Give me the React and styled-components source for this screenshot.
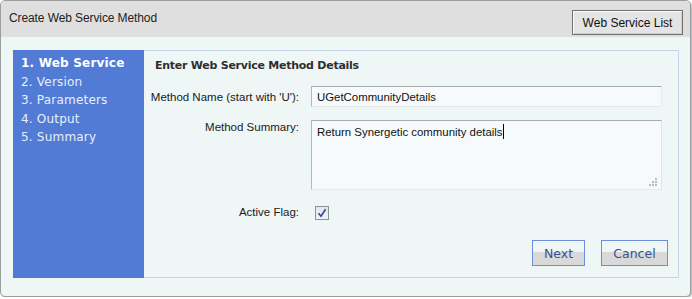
import React from "react";
import styled, { createGlobalStyle } from "styled-components";

const Global = createGlobalStyle`
  html, body { margin: 0; padding: 0; background: #ffffff; }
  * { box-sizing: border-box; }
`;

const Dialog = styled.div`
  width: 691px;
  height: 297px;
  border: 1px solid #9a9e9e;
  border-radius: 5px;
  background: #eef6f6;
  box-shadow: 1px 1px 1px #b5b8b8;
  overflow: hidden;
  display: flex;
  flex-direction: column;
`;

const TitleBar = styled.div`
  height: 36px;
  flex: none;
  background: #dfdfdf;
  display: flex;
  justify-content: space-between;
  align-items: flex-start;
  padding: 0 7px 0 8px;
`;

const Title = styled.div`
  margin-top: 9px;
  font: 12px/16px "Liberation Sans", Arial, sans-serif;
  letter-spacing: -0.1px;
  color: #222;
`;

const ListButton = styled.button`
  margin-top: 9px;
  width: 111px;
  height: 25px;
  padding: 0;
  border: 1px solid #707070;
  background: #e4e4e4;
  box-shadow: inset 1px 1px 0 #fbfbfb, inset -1px -1px 0 #cfcfcf;
  font: 12px "Liberation Sans", Arial, sans-serif;
  color: #111;
`;

const Body = styled.div`
  padding: 13px 11px 0 12px;
`;

const Panel = styled.div`
  height: 228px;
  border: 1px solid #c6d5e8;
  display: flex;
`;

const Sidebar = styled.ul`
  width: 131px;
  margin: -1px 0 -1px -1px;
  padding: 4px 0 0 8px;
  list-style: none;
  background: #527bd6;
`;

const Step = styled.li`
  font: ${(p) => (p.$active ? "bold" : "normal")} 12px/18.5px "DejaVu Sans", Verdana, sans-serif;
  color: ${(p) => (p.$active ? "#ffffff" : "#e8eefa")};
  letter-spacing: 0.2px;
`;

const Content = styled.div`
  flex: 1;
  padding: 7px 10px 0 0;
  display: flex;
  flex-direction: column;
`;

const Heading = styled.div`
  padding-left: 11px;
  font: bold 11px/16px "DejaVu Sans", Verdana, sans-serif;
  letter-spacing: -0.25px;
  color: #2e2e2e;
  margin-bottom: 12px;
`;

const Form = styled.div`
  display: grid;
  grid-template-columns: 155px 351px;
  column-gap: 12px;
  row-gap: 13px;
  align-items: center;
`;

const Label = styled.div`
  text-align: right;
  font: 11.5px/14px "Liberation Sans", Arial, sans-serif;
  color: #1a1a1a;
  align-self: ${(p) => (p.$top ? "start" : "center")};
`;

const Field = styled.div`
  height: 21px;
  border: 1px solid #c8cccc;
  border-top-color: #a8acac;
  border-left-color: #b4b8b8;
  border-right-color: #e6eaea;
  border-bottom-color: #e6eaea;
  background: #f6fafa;
  padding: 2px 5px;
  font: 11.4px/16px "Liberation Sans", Arial, sans-serif;
  color: #111;
`;

const Area = styled.div`
  position: relative;
  height: 70px;
  border: 1px solid #c8cccc;
  border-top-color: #a8acac;
  border-left-color: #b4b8b8;
  border-right-color: #dfe3e3;
  border-bottom-color: #e6eaea;
  background: #f6fafa;
  padding: 3px 5px;
  font: 11.4px/16px "Liberation Sans", Arial, sans-serif;
  color: #111;
`;

const Caret = styled.span`
  display: inline-block;
  width: 1px;
  height: 15px;
  background: #000;
  vertical-align: -3px;
`;

const Grip = styled.svg`
  position: absolute;
  right: 4px;
  bottom: 3px;
`;

const CheckRow = styled.div`
  padding: 3px 0 0 4px;
`;

const CheckBox = styled.span`
  display: flex;
  width: 14px;
  height: 14px;
  border: 1px solid #8e9296;
  background: linear-gradient(#e2e5ea, #f0f2f6);
  align-items: center;
  justify-content: center;
`;

const Actions = styled.div`
  display: flex;
  justify-content: flex-end;
  gap: 16px;
  margin-top: 20px;
`;

const ActionButton = styled.button`
  width: ${(p) => p.$w}px;
  height: 26px;
  padding: 0;
  border: 1px solid #6c8edc;
  background: linear-gradient(#eef6f6 0, #eef6f6 45%, #d9d9d9 45%, #d9d9d9 100%);
  font: 12.5px "DejaVu Sans", Verdana, sans-serif;
  color: #3b5190;
`;

export default function App() {
  return (
    <>
      <Global />
      <Dialog>
        <TitleBar>
          <Title>Create Web Service Method</Title>
          <ListButton>Web Service List</ListButton>
        </TitleBar>
        <Body>
          <Panel>
            <Sidebar>
              <Step $active>1. Web Service</Step>
              <Step>2. Version</Step>
              <Step>3. Parameters</Step>
              <Step>4. Output</Step>
              <Step>5. Summary</Step>
            </Sidebar>
            <Content>
              <Heading>Enter Web Service Method Details</Heading>
              <Form>
                <Label>Method Name (start with 'U'):</Label>
                <Field>UGetCommunityDetails</Field>
                <Label $top>Method Summary:</Label>
                <Area>
                  Return Synergetic community details<Caret />
                  <Grip width="9" height="9" viewBox="0 0 9 9">
                    <g fill="#b8bcbc">
                      <rect x="7" y="1" width="2" height="2" />
                      <rect x="4" y="4" width="2" height="2" />
                      <rect x="7" y="4" width="2" height="2" />
                      <rect x="1" y="7" width="2" height="2" />
                      <rect x="4" y="7" width="2" height="2" />
                      <rect x="7" y="7" width="2" height="2" />
                    </g>
                  </Grip>
                </Area>
                <Label>Active Flag:</Label>
                <CheckRow>
                  <CheckBox>
                    <svg width="10" height="10" viewBox="0 0 10 10">
                      <path d="M1.5 5.2 L4 8.2 L8.6 1.2" fill="none" stroke="#2c44a6" strokeWidth="1.6" />
                    </svg>
                  </CheckBox>
                </CheckRow>
              </Form>
              <Actions>
                <ActionButton $w={53}>Next</ActionButton>
                <ActionButton $w={67}>Cancel</ActionButton>
              </Actions>
            </Content>
          </Panel>
        </Body>
      </Dialog>
    </>
  );
}
